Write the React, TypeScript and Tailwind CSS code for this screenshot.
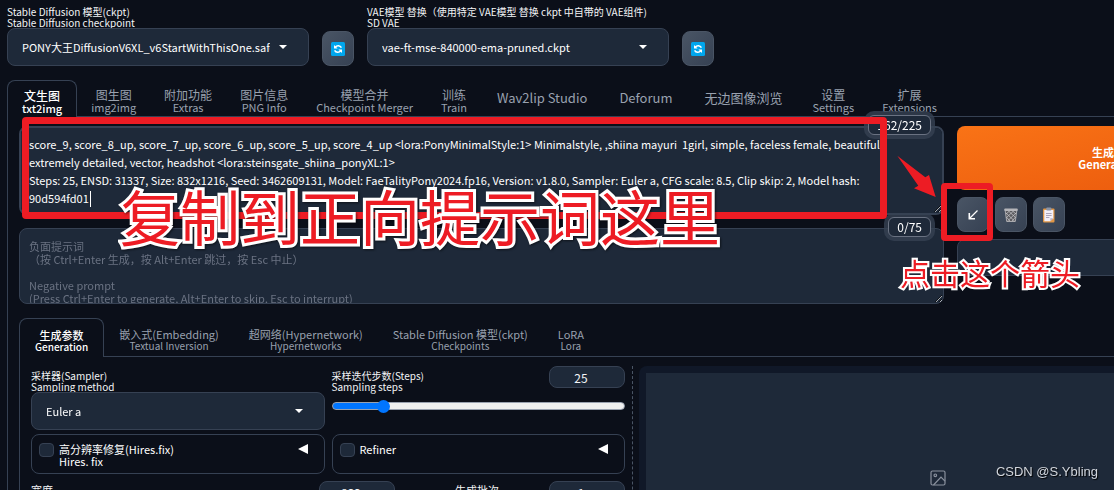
import React, { useState } from 'react';

const positivePrompt =
    'score_9, score_8_up, score_7_up, score_6_up, score_5_up, score_4_up <lora:PonyMinimalStyle:1> Minimalstyle, ,shiina mayuri  1girl, simple, faceless female, beautiful, extremely detailed, vector, headshot <lora:steinsgate_shiina_ponyXL:1>\n' +
    'Steps: 25, ENSD: 31337, Size: 832x1216, Seed: 3462609131, Model: FaeTalityPony2024.fp16, Version: v1.8.0, Sampler: Euler a, CFG scale: 8.5, Clip skip: 2, Model hash: 90d594fd01';

const negativePlaceholder =
    '负面提示词\n（按 Ctrl+Enter 生成，按 Alt+Enter 跳过，按 Esc 中止）\n\nNegative prompt\n(Press Ctrl+Enter to generate, Alt+Enter to skip, Esc to interrupt)';

const mainTabs = [
    ['文生图', 'txt2img'],
    ['图生图', 'img2img'],
    ['附加功能', 'Extras'],
    ['图片信息', 'PNG Info'],
    ['模型合并', 'Checkpoint Merger'],
    ['训练', 'Train'],
    ['Wav2lip Studio'],
    ['Deforum'],
    ['无边图像浏览'],
    ['设置', 'Settings'],
    ['扩展', 'Extensions'],
];

const subTabs = [
    ['生成参数', 'Generation'],
    ['嵌入式(Embedding)', 'Textual Inversion'],
    ['超网络(Hypernetwork)', 'Hypernetworks'],
    ['Stable Diffusion 模型(ckpt)', 'Checkpoints'],
    ['LoRA', 'Lora'],
];

const RefreshIcon = () => (
    <svg width="14" height="14" viewBox="0 0 14 14" fill="none">
        <rect width="14" height="14" rx="1.5" fill="#00a6ed" />
        <path d="M4.3 5.2A3.6 3.6 0 0 1 10.4 5.6M9.7 8.8A3.6 3.6 0 0 1 3.6 8.4" stroke="#fff" strokeWidth="1.5" />
        <path d="M3 3v3.6h3.6zM11 11V7.4H7.4z" fill="#fff" />
    </svg>
);

const ArrowIcon = () => (
    <svg width="12" height="12" viewBox="0 0 12 12" fill="none" stroke="#fff">
        <path d="M10.5 1.5L3 9" strokeWidth="1.3" />
        <path d="M2.3 4v5.7H8" strokeWidth="1.6" />
    </svg>
);

const TrashIcon = () => (
    <svg width="16" height="16" viewBox="0 0 16 16" fill="none">
        <path d="M2.2 3.5h11.6l-1.5 11H3.7z" fill="#5b5b5f" stroke="#a9a9ad" />
        <path d="M3 6l8.5 8M5.5 4l7 6.5M9.5 4l3.5 3M3.3 10l3.7 4M13 6l-8.5 8M10.5 4l-7 6.5M6.5 4L3 7M12.7 10L9 14" stroke="#c2c2c6" strokeWidth=".8" />
        <rect x="1.2" y="1.5" width="13.6" height="2.4" rx="1" fill="#b5b5b9" />
    </svg>
);

const ClipboardIcon = () => (
    <svg width="14" height="16" viewBox="0 0 14 16" fill="none">
        <rect x="1" y="1.5" width="11.5" height="14" rx="1" fill="#e19747" />
        <path d="M2.3 3h9v8.3l-3 2.9h-6z" fill="#f4f0f8" />
        <path d="M11.3 11.3h-3v2.9z" fill="#b9b3c6" />
        <path d="M4 6.5h5.6M4 8.5h5.6M4 10.5h3.4" stroke="#9a93ab" strokeWidth=".8" />
        <rect x="4.2" y=".6" width="5.2" height="3" rx="1" fill="#8a94a6" />
    </svg>
);

const ImageIcon = () => (
    <svg width="16" height="16" viewBox="0 0 16 16" fill="none" stroke="#8a919e" strokeWidth="1.2">
        <rect x="1" y="1" width="14" height="14" rx="1.5" />
        <circle cx="5.3" cy="5.3" r="1.3" />
        <path d="M3.5 15l7.5-8 4 4.2" />
    </svg>
);

type SelectFieldProps = { id: string; label: string; sub: string; value: string; className?: string };

const SelectField = ({ id, label, sub, value, className = '' }: SelectFieldProps) => (
    <div className={className}>
        <label htmlFor={id} className="block whitespace-nowrap text-[10px] leading-[11px] text-gray-100">
            {label}
            <br />
            {sub}
        </label>
        <div className="relative">
            <select
                id={id}
                className="block h-[38px] w-full appearance-none rounded-lg border border-gray-700 bg-gray-800 pl-[14px] pr-[38px] text-[11px] text-white"
            >
                <option>{value}</option>
            </select>
            <svg className="pointer-events-none absolute right-[22px] top-[17px]" width="8" height="4" viewBox="0 0 8 4">
                <path d="M0 0h8L4 4z" fill="#fff" />
            </svg>
        </div>
    </div>
);

type ToolButtonProps = { title: string; children: React.ReactNode };

const ToolButton = ({ title, children }: ToolButtonProps) => (
    <button
        aria-label={title}
        className="flex h-[35px] w-8 shrink-0 items-center justify-center rounded-lg border border-gray-600 bg-linear-to-br from-gray-600 to-gray-700"
    >
        {children}
    </button>
);

type TabBarProps = {
    tabs: string[][];
    active: number;
    onSelect: (i: number) => void;
    className: string;
    tabClass: string;
    subClass: string;
};

const TabBar = ({ tabs, active, onSelect, className, tabClass, subClass }: TabBarProps) => (
    <div role="tablist" className={`flex ${className}`}>
        {tabs.map((tab, i) => (
            <button
                key={tab[0]}
                role="tab"
                aria-selected={i === active}
                onClick={() => onSelect(i)}
                className={`flex shrink-0 flex-col items-center justify-center whitespace-nowrap ${
                    tab.length === 1 ? 'px-4 text-[13px]' : `pt-[5px] leading-[12px] ${tabClass}`
                } ${
                    i === active
                        ? 'rounded-t-lg border border-b-0 border-gray-700 font-medium text-white'
                        : 'border-b border-gray-700 text-gray-400'
                }`}
            >
                <span>{tab[0]}</span>
                {tab[1] && <span className={subClass}>{tab[1]}</span>}
            </button>
        ))}
        <div className="grow border-b border-gray-700"></div>
    </div>
);

const Counter = ({ text }: { text: string }) => (
    <span className="absolute -top-[11px] right-[13px] rounded-md border border-gray-500 bg-gray-800 px-2 text-[12px] leading-[18px] text-white ring-4 ring-gray-700/80">
        {text}
    </span>
);

const AccordionBox = ({ id, label, sub }: { id: string; label: string; sub?: string }) => (
    <div className="flex h-10 items-start rounded-lg border border-gray-700 pl-[7px] pr-4 pt-2">
        <input id={id} type="checkbox" className="h-[14px] w-[15px] appearance-none rounded-sm border border-gray-700 bg-gray-800" />
        <label htmlFor={id} className="ml-[5px] grow text-[11px] leading-[12px] text-white">
            {label}
            {sub && <br />}
            {sub}
        </label>
        <svg className="mt-px" width="10" height="10" viewBox="0 0 10 10">
            <path d="M10 0v10L0 5z" fill="#fff" />
        </svg>
    </div>
);

const NumberBox = ({ label, value, className = '' }: { label: string; value: string; className?: string }) => (
    <input
        aria-label={label}
        defaultValue={value}
        className={`h-[22px] w-[76px] shrink-0 rounded-lg border border-gray-700 bg-gray-800 pr-3 text-center text-[12px] text-gray-100 ${className}`}
    />
);

const Annotations = () => (
    <div className="pointer-events-none absolute inset-0">
        <div className="absolute left-[22px] top-[117px] h-[102px] w-[865px] rounded-sm border-[7px] border-[#ed1c24]"></div>
        <div className="absolute left-[941px] top-[183px] h-[58px] w-[52px] rounded-sm border-[6px] border-[#ed1c24]"></div>
        <svg className="absolute left-[896px] top-[154px]" width="42" height="44" viewBox="0 0 42 44">
            <path d="M1.3 1.7L29.3 23.3 33 21l6.7 22L18 34.3l4.3-2.6z" fill="#ed1c24" />
        </svg>
        <p className="absolute left-[120px] top-[185px] whitespace-nowrap text-[60px] leading-[60px] text-[#ed1c24] [-webkit-text-stroke:6px_white] [paint-order:stroke_fill] drop-shadow-[1px_1px_1px_#0008]">
            复制到正向提示词这里
        </p>
        <p className="absolute left-[900px] top-[257px] whitespace-nowrap text-[30px] leading-[30px] text-[#ed1c24] [-webkit-text-stroke:4px_white] [paint-order:stroke_fill]">
            点击这个箭头
        </p>
        <p className="absolute bottom-[9px] right-4 font-['Liberation_Sans',sans-serif] text-[13px] leading-[18px] text-gray-300 [text-shadow:1px_1px_1px_#000]">
            CSDN @S.Ybling
        </p>
    </div>
);

const App: React.FC = () => {
    const [mainTab, setMainTab] = useState(0);
    const [subTab, setSubTab] = useState(0);
    const [prompt, setPrompt] = useState(positivePrompt);

    return (
        <div className="relative h-screen overflow-hidden bg-[#0b0f19] pl-[7px] pt-1.5 font-['Noto_Sans_CJK_SC',sans-serif]">
            <header className="flex items-end gap-[13px]">
                <SelectField id="ckpt" className="w-[302px]" label="Stable Diffusion 模型(ckpt)" sub="Stable Diffusion checkpoint" value="PONY大王DiffusionV6XL_v6StartWithThisOne.safetensors" />
                <ToolButton title="Refresh checkpoints"><RefreshIcon /></ToolButton>
                <SelectField id="vae" className="w-[302px]" label="VAE模型 替换（使用特定 VAE模型 替换 ckpt 中自带的 VAE组件)" sub="SD VAE" value="vae-ft-mse-840000-ema-pruned.ckpt" />
                <ToolButton title="Refresh VAE"><RefreshIcon /></ToolButton>
            </header>

            <main className="mt-[14px] min-w-[1253px]">
                <TabBar
                    tabs={mainTabs}
                    active={mainTab}
                    onSelect={setMainTab}
                    className="h-[37px]"
                    tabClass="px-[14px] text-[12px]"
                    subClass="text-[11px]"
                />
                <div className="border-l border-gray-700 px-[11px] pt-[9px]">
                    <div className="flex gap-[13px]">
                        <div className="flex grow flex-col gap-[13px]">
                            <div className="relative">
                                <textarea
                                    aria-label="Prompt"
                                    value={prompt}
                                    onChange={(e) => setPrompt(e.target.value)}
                                    className="block h-[89px] w-full rounded-lg border-2 border-gray-700 bg-gray-800 pb-2 pl-2 pr-10 pt-[7px] text-[11px] leading-[18px] text-white"
                                />
                                {/* text cursor */}
                                <span className="absolute bottom-2 left-[71px] h-4 w-px bg-white"></span>
                                <Counter text="162/225" />
                            </div>
                            <div className="relative">
                                <textarea
                                    aria-label="Negative prompt"
                                    placeholder={negativePlaceholder}
                                    className="block h-[76px] w-full overflow-hidden rounded-lg border border-gray-700 bg-gray-800 px-[9px] pt-[11px] text-[11px] leading-[13px] text-white placeholder:text-gray-500"
                                />
                                <Counter text="0/75" />
                            </div>
                        </div>
                        <div className="flex w-[292px] shrink-0 flex-col gap-[7px]">
                            <button className="h-16 rounded-lg bg-linear-to-br from-[#f97316] to-[#ea580c] text-[11px] font-bold leading-[12px] text-white">
                                生成
                                <br />
                                Generate
                            </button>
                            <div className="flex gap-1.5">
                                <ToolButton title="Read generation parameters"><ArrowIcon /></ToolButton>
                                <ToolButton title="Clear prompt"><TrashIcon /></ToolButton>
                                <ToolButton title="Apply styles"><ClipboardIcon /></ToolButton>
                            </div>
                            <input aria-label="Styles" className="h-[37px] rounded-lg border border-gray-700 bg-gray-800" />
                        </div>
                    </div>

                    <div className="mt-[14px]">
                        <TabBar
                            tabs={subTabs}
                            active={subTab}
                            onSelect={setSubTab}
                            className="h-[39px]"
                            tabClass="px-[15px] text-[11px]"
                            subClass="text-[10px]"
                        />
                        <div className="flex border-l border-gray-700 pl-[11px] pr-3 pt-[9px]">
                            <div className="w-[594px] shrink-0">
                                <div className="grid grid-cols-2 gap-x-[7px] gap-y-1">
                                    <SelectField id="sampler" className="pt-1" label="采样器(Sampler)" sub="Sampling method" value="Euler a" />
                                    <div>
                                        <div className="flex justify-between">
                                            <label htmlFor="steps" className="pt-1 text-[10px] leading-[11px] text-gray-100">
                                                采样迭代步数(Steps)
                                                <br />
                                                Sampling steps
                                            </label>
                                            <NumberBox label="Sampling steps value" value="25" />
                                        </div>
                                        <input
                                            id="steps"
                                            type="range"
                                            min="1"
                                            max="150"
                                            defaultValue="25"
                                            className="mt-2.5 block h-2 w-full appearance-none rounded-full border border-gray-400 bg-[linear-gradient(to_right,#0075ff_18%,#efefef_18%)] [&::-webkit-slider-thumb]:h-[13px] [&::-webkit-slider-thumb]:w-[13px] [&::-webkit-slider-thumb]:appearance-none [&::-webkit-slider-thumb]:rounded-full [&::-webkit-slider-thumb]:bg-[#0075ff]"
                                        />
                                    </div>
                                    <AccordionBox id="hires" label="高分辨率修复(Hires.fix)" sub="Hires. fix" />
                                    <AccordionBox id="refiner" label="Refiner" />
                                </div>
                                <div className="mt-[7px] flex text-[11px] leading-[11px] text-gray-100">
                                    <div className="flex w-[424px] justify-between">
                                        <span className="pt-1">宽度<br />Width</span>
                                        <NumberBox label="Width" value="832" className="mr-[60px]" />
                                    </div>
                                    <div className="flex grow justify-between">
                                        <span className="pt-1">生成批次<br />Batch count</span>
                                        <NumberBox label="Batch count" value="1" />
                                    </div>
                                </div>
                            </div>
                            <div className="ml-[7px] mr-1.5 border-l border-dashed border-gray-600"></div>
                            <div className="grow rounded-lg bg-gray-900 p-[7px]">
                                <div className="flex h-[210px] items-center justify-center bg-gray-800">
                                    <ImageIcon />
                                </div>
                            </div>
                        </div>
                    </div>
                </div>
            </main>
            <Annotations />
        </div>
    );
};

export default App;
